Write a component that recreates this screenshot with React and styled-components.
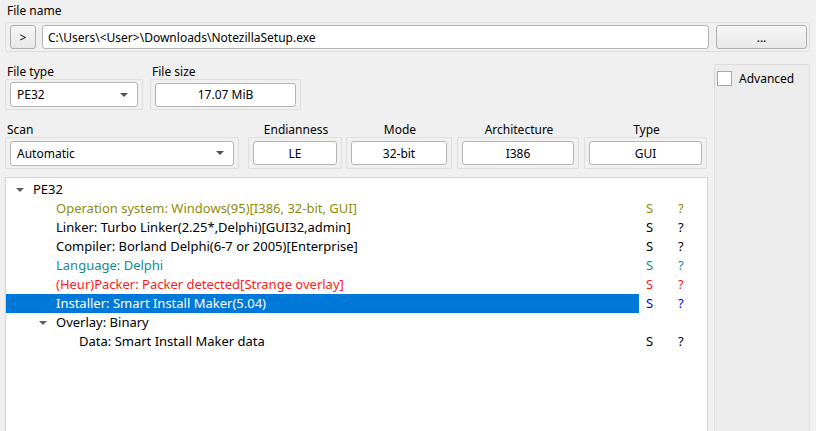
import React from 'react';
import styled, { createGlobalStyle } from 'styled-components';

const GlobalStyle = createGlobalStyle`
  html, body { margin: 0; padding: 0; background: #f0f0f0; }
  body { font-family: 'Noto Sans', 'Open Sans', sans-serif; font-size: 12px; color: #000; }
`;

const Window = styled.div`
  width: 816px;
  height: 431px;
  overflow: hidden;
  background: #f0f0f0;
  padding: 0 6px 0 5px;
  box-sizing: border-box;
`;

const Label = styled.div`
  height: 19px;
  line-height: ${(p) => (p.low ? 23 : 19)}px;
  padding-left: 2px;
  text-align: ${(p) => (p.center ? 'center' : 'left')};
  white-space: nowrap;
`;

const Frame = styled.div`
  display: flex;
  align-items: center;
  gap: ${(p) => p.gap || 0}px;
  border: 1px solid #dedede;
  border-radius: 2px;
  padding: 2px ${(p) => (p.pr !== undefined ? p.pr : 4)}px 2px 4px;
  box-sizing: border-box;
  height: ${(p) => p.h || 30}px;
`;

const Button = styled.div`
  width: ${(p) => p.w}px;
  height: 24px;
  box-sizing: border-box;
  border: 1px solid #adadad;
  border-radius: 3px;
  background: linear-gradient(#f6f6f6, #e8e8e8);
  display: flex;
  align-items: center;
  justify-content: center;
  flex-shrink: 0;
`;

const Field = styled.div`
  flex: 1;
  min-width: 0;
  height: 24px;
  box-sizing: border-box;
  border: 1px solid #b4b4b4;
  border-radius: 3px;
  background: #fff;
  display: flex;
  align-items: center;
  justify-content: ${(p) => (p.center ? 'center' : 'flex-start')};
  padding: 0 5px;
  white-space: nowrap;
`;

const Combo = styled(Field)`
  justify-content: space-between;
  padding: 0 9px 0 6px;
  height: 25px;
`;

const ComboArrow = styled.span`
  width: 0;
  height: 0;
  border-left: 4px solid transparent;
  border-right: 4px solid transparent;
  border-top: 4px solid #505050;
`;

const Main = styled.div`
  display: grid;
  grid-template-columns: 703px 96px;
  column-gap: 6px;
  margin-top: 8px;
`;

const LeftCol = styled.div`
  display: flex;
  flex-direction: column;
`;

const InfoRow = styled.div`
  display: flex;
  gap: ${(p) => p.gap || 5}px;
  margin-bottom: ${(p) => p.mb || 0}px;
`;

const Group = styled.div`
  width: ${(p) => p.w}px;
  flex-shrink: 0;
  margin-right: ${(p) => p.mr || 0}px;
  display: flex;
  flex-direction: column;
`;

const Side = styled.div`
  margin-top: 4px;
  height: 372px;
  border: 1px solid #dcdcdc;
  border-radius: 2px;
  background: #ececec;
  box-sizing: border-box;
  padding: 6px 2px;
  display: flex;
  align-items: flex-start;
  gap: 7px;
`;

const CheckBox = styled.span`
  width: 13px;
  height: 13px;
  border: 1px solid #a8a8a8;
  background: #fff;
  flex-shrink: 0;
`;

const Tree = styled.div`
  margin-top: 8px;
  height: 260px;
  background: #fff;
  border: 1px solid #d4d4d4;
  box-sizing: border-box;
  padding-top: 2px;
  font-size: 13px;
`;

const Row = styled.div`
  display: grid;
  grid-template-columns: 633px 32px 1fr;
  height: 19px;
  line-height: 19px;
  white-space: nowrap;
  color: ${(p) => p.color};
`;

const NameCell = styled.div`
  display: flex;
  align-items: center;
  padding-left: ${(p) => 4 + p.depth * 23}px;
  background: ${(p) => (p.selected ? '#0078d7' : 'transparent')};
  color: ${(p) => (p.selected ? '#fff' : 'inherit')};
`;

const Twisty = styled.span`
  width: 23px;
  flex-shrink: 0;
  display: flex;
  align-items: center;
  padding-left: 6px;
  box-sizing: border-box;
  &::before {
    content: '';
    display: ${(p) => (p.open ? 'block' : 'none')};
    width: 0;
    height: 0;
    border-left: 4px solid transparent;
    border-right: 4px solid transparent;
    border-top: 4px solid #5e5e5e;
  }
`;

const Cell = styled.div`
  padding-left: 7px;
  color: ${(p) => p.color || 'inherit'};
`;

const rows = [
  { depth: 0, open: true, text: 'PE32' },
  { depth: 1, text: 'Operation system: Windows(95)[I386, 32-bit, GUI]', color: '#8d8d0c', flags: true },
  { depth: 1, text: 'Linker: Turbo Linker(2.25*,Delphi)[GUI32,admin]', color: '#000', flags: true },
  { depth: 1, text: 'Compiler: Borland Delphi(6-7 or 2005)[Enterprise]', color: '#000', flags: true },
  { depth: 1, text: 'Language: Delphi', color: '#168c8c', flags: true },
  { depth: 1, text: '(Heur)Packer: Packer detected[Strange overlay]', color: '#ff1a1a', flags: true },
  { depth: 1, text: 'Installer: Smart Install Maker(5.04)', color: '#0000ff', flags: true, selected: true },
  { depth: 1, open: true, text: 'Overlay: Binary' },
  { depth: 2, text: 'Data: Smart Install Maker data', color: '#000', flags: true },
];

export default function App() {
  return (
    <Window>
      <GlobalStyle />
      <Label style={{ paddingTop: 1 }}>File name</Label>
      <Frame gap={6} pr={2} style={{ marginTop: 2 }}>
        <Button w={26}>&gt;</Button>
        <Field>C:\Users\&lt;User&gt;\Downloads\NotezillaSetup.exe</Field>
        <Button w={91} style={{ marginLeft: 1 }}>...</Button>
      </Frame>
      <Main>
        <LeftCol>
          <InfoRow gap={7} mb={8}>
            <Group w={138}>
              <Label low>File type</Label>
              <Frame h={31}>
                <Combo>
                  PE32
                  <ComboArrow />
                </Combo>
              </Frame>
            </Group>
            <Group w={151}>
              <Label low>File size</Label>
              <Frame h={31}>
                <Field center>17.07 MiB</Field>
              </Frame>
            </Group>
          </InfoRow>
          <InfoRow gap={5}>
            <Group w={234} mr={4}>
              <Label low>Scan</Label>
              <Frame h={32}>
                <Combo>
                  Automatic
                  <ComboArrow />
                </Combo>
              </Frame>
            </Group>
            <Group w={94} mr={-1}>
              <Label low center>Endianness</Label>
              <Frame h={32}>
                <Field center>LE</Field>
              </Frame>
            </Group>
            <Group w={106}>
              <Label low center>Mode</Label>
              <Frame h={32}>
                <Field center>32-bit</Field>
              </Frame>
            </Group>
            <Group w={122}>
              <Label low center>Architecture</Label>
              <Frame h={32}>
                <Field center>I386</Field>
              </Frame>
            </Group>
            <Group w={123}>
              <Label low center>Type</Label>
              <Frame h={32}>
                <Field center>GUI</Field>
              </Frame>
            </Group>
          </InfoRow>
          <Tree>
            {rows.map((r, i) => (
              <Row key={i} color={r.color || '#000'}>
                <NameCell depth={r.depth} selected={r.selected}>
                  <Twisty open={r.open} />
                  {r.text}
                </NameCell>
                <Cell>{r.flags ? 'S' : ''}</Cell>
                <Cell>{r.flags ? '?' : ''}</Cell>
              </Row>
            ))}
          </Tree>
        </LeftCol>
        <Side>
          <CheckBox />
          <span style={{ lineHeight: '15px' }}>Advanced</span>
        </Side>
      </Main>
    </Window>
  );
}
